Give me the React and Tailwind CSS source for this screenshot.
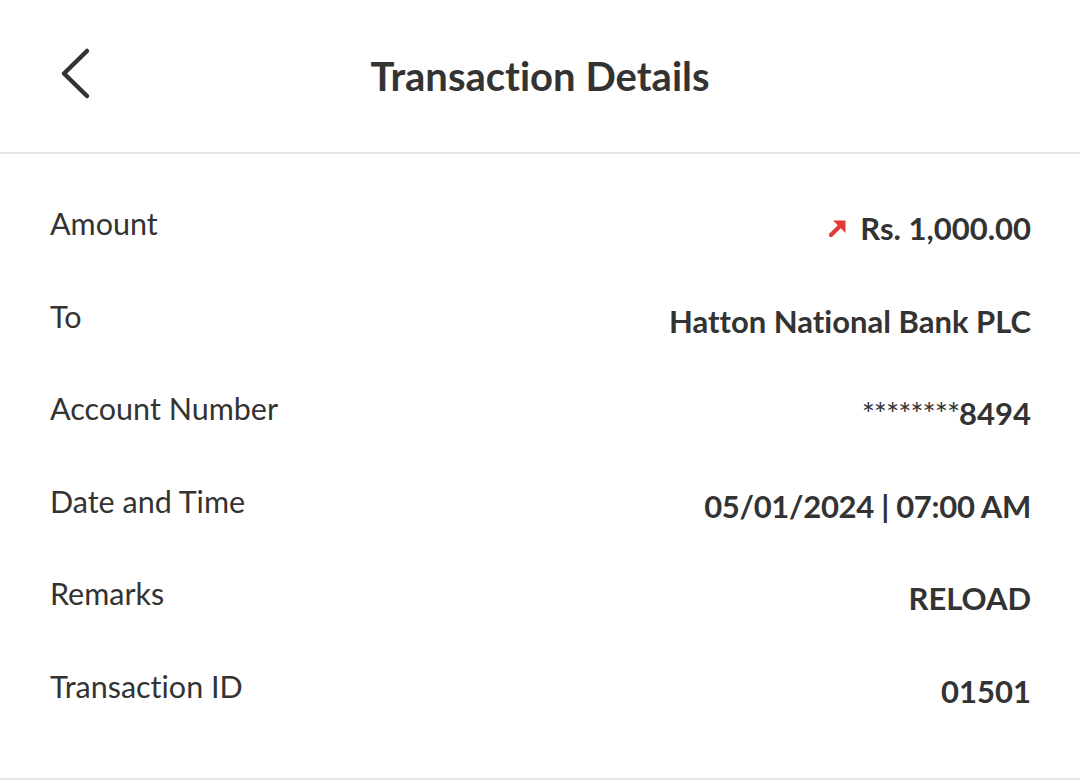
import React from 'react';

const rows = [
  { label: 'Amount', value: 'Rs. 1,000.00', outgoing: true },
  { label: 'To', value: 'Hatton National Bank PLC' },
  { label: 'Account Number', value: '8494', masked: '********' },
  { label: 'Date and Time', value: '05/01/2024 | 07:00 AM', tight: true },
  { label: 'Remarks', value: 'RELOAD' },
  { label: 'Transaction ID', value: '01501' },
];

const BackIcon = () => (
  <svg width="40" height="56" viewBox="0 0 40 56" fill="none">
    <path d="M35 5 L12 27.5 L35 50" stroke="#333333" strokeWidth="4.5" strokeLinecap="round" strokeLinejoin="round" />
  </svg>
);

const OutArrow = () => (
  <svg width="17" height="17" viewBox="0 0 17 17" fill="none">
    <path d="M2 15 L11 6" stroke="#e53935" strokeWidth="4.2" strokeLinecap="square" />
    <path d="M4 0.5 L16.5 0.5 L16.5 13 Z" fill="#e53935" />
  </svg>
);

export default function App() {
  return (
    <div className="w-[1080px] h-[780px] bg-white text-[#333333] font-['Lato','Open_Sans',sans-serif] [font-variant-ligatures:none] overflow-hidden">
      {/* header */}
      <div className="h-[154px] border-b-2 border-[#e4e4e4] grid grid-cols-[1fr_auto_1fr] items-center">
        <div className="pl-[52px] pb-[4px] flex items-center">
          <BackIcon />
        </div>
        <h1 className="text-[40px] font-bold leading-none">Transaction Details</h1>
        <div />
      </div>

      {/* details */}
      <div className="h-[626px] border-b-2 border-[#e4e4e4] pt-[49px] px-[50px]">
        {rows.map((r) => (
          <div key={r.label} className="h-[92.5px] flex justify-between items-start">
            <span className="text-[30.5px] leading-[40px]">{r.label}</span>
            <span className="mt-[5px] text-[31px] leading-[40px] font-bold flex items-center gap-[14px] -mr-[1px]">
              {r.outgoing && <OutArrow />}
              <span className={r.tight ? 'tracking-[-0.3px]' : ''}>
                {r.masked && <span className="font-normal tracking-[-1px]">{r.masked}</span>}
                {r.value}
              </span>
            </span>
          </div>
        ))}
      </div>
    </div>
  );
}
